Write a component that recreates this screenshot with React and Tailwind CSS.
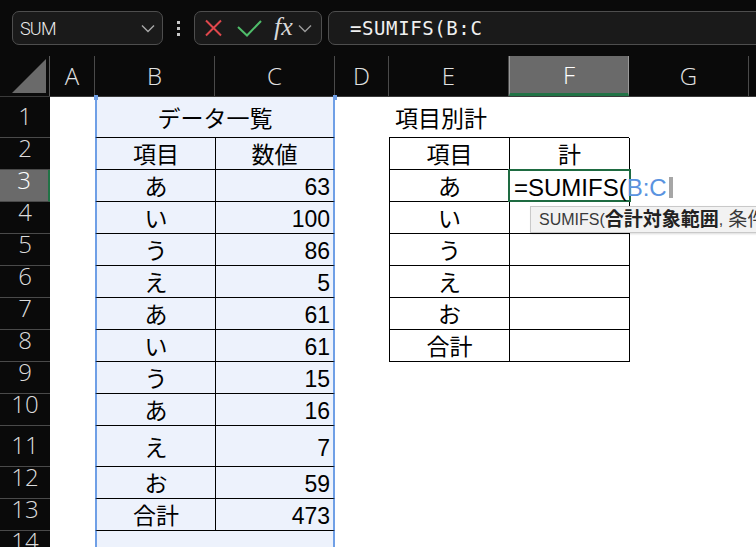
import React from 'react';

// Excel風の画面: 名前ボックス + 数式バー + シート
const COLS = [
  { key: 'A', w: 'w-[45px]' },
  { key: 'B', w: 'w-[120px]' },
  { key: 'C', w: 'w-[120px]' },
  { key: 'D', w: 'w-[54px]' },
  { key: 'E', w: 'w-[120px]' },
  { key: 'F', w: 'w-[120px]' },
  { key: 'G', w: 'w-[120px]' },
];

const ROWS = [
  { n: 1, h: 'h-[41px]', title: 'データ一覧', e: '項目別計' },
  { n: 2, h: 'h-[32px]', b: '項目', c: '数値', e: '項目', f: '計' },
  { n: 3, h: 'h-[32px]', b: 'あ', c: '63', e: 'あ', active: true },
  { n: 4, h: 'h-[32px]', b: 'い', c: '100', e: 'い' },
  { n: 5, h: 'h-[32px]', b: 'う', c: '86', e: 'う' },
  { n: 6, h: 'h-[32px]', b: 'え', c: '5', e: 'え' },
  { n: 7, h: 'h-[32px]', b: 'あ', c: '61', e: 'お' },
  { n: 8, h: 'h-[32px]', b: 'い', c: '61', e: '合計' },
  { n: 9, h: 'h-[32px]', b: 'う', c: '15' },
  { n: 10, h: 'h-[32px]', b: 'あ', c: '16' },
  { n: 11, h: 'h-[41px]', b: 'え', c: '7' },
  { n: 12, h: 'h-[32px]', b: 'お', c: '59' },
  { n: 13, h: 'h-[32px]', b: '合計', c: '473' },
  { n: 14, h: 'h-[32px]' },
];

const Chevron = ({ className }) => (
  <svg width="14" height="9" viewBox="0 0 14 9" className={className}>
    <path d="M1 1.5 L7 7.5 L13 1.5" fill="none" stroke="currentColor" strokeWidth="1.4" />
  </svg>
);

const TopBar = () => (
  <div className="h-[56px] bg-[#0a0a0a] flex items-start pt-[11px]">
    <div className="ml-[12px] w-[151px] h-[34px] shrink-0 rounded-[7px] border border-[#4e4e4e] bg-[#1a1a1a] flex items-center justify-between pl-[7px] pr-[7px]">
      <span className="font-['Roboto'] font-light text-[18px] tracking-[-0.8px] text-[#ececec]">SUM</span>
      <Chevron className="text-[#a8a8a8]" />
    </div>
    <div className="w-[31px] h-[34px] shrink-0 flex flex-col items-center justify-center gap-[3px]">
      <span className="w-[3px] h-[3px] bg-[#c8c8c8]" />
      <span className="w-[3px] h-[3px] bg-[#c8c8c8]" />
      <span className="w-[3px] h-[3px] bg-[#c8c8c8]" />
    </div>
    <div className="w-[128px] h-[34px] shrink-0 rounded-[7px] border border-[#4e4e4e] bg-[#1a1a1a] flex items-center pl-[9px]">
      <svg width="19" height="18" viewBox="0 0 19 18">
        <path d="M2 1.5 L17 16.5 M17 1.5 L2 16.5" stroke="#e0474c" strokeWidth="2" fill="none" />
      </svg>
      <svg width="25" height="18" viewBox="0 0 25 18" className="ml-[14px]">
        <path d="M1 8 L10 16.5 L24 2" stroke="#4fbd6a" strokeWidth="2" fill="none" />
      </svg>
      <span className="ml-[12px] font-['Liberation_Serif'] italic text-[26px] leading-none text-[#d8d8d8] -mt-[3px]">fx</span>
      <Chevron className="ml-[5px] text-[#9a9a9a]" />
    </div>
    <div className="ml-[6px] flex-1 -mr-[20px] h-[34px] rounded-[7px] border border-[#4e4e4e] bg-[#1a1a1a] flex items-center pl-[21px]">
      <span className="font-['DejaVu_Sans_Mono'] text-[19px] tracking-[0.6px] text-[#f0f0f0]">=SUMIFS(B:C</span>
    </div>
  </div>
);

const ColumnHeader = () => (
  <div className="h-[41px] flex bg-[#0a0a0a] border-b border-[#3a3a3a]">
    <div className="w-[50px] shrink-0 border-r border-[#5a5a5a] flex items-end justify-end pr-[3px] pb-[3px]">
      <svg width="34" height="34" viewBox="0 0 34 34">
        <polygon points="34,0 34,34 0,34" fill="#6a6a6a" />
      </svg>
    </div>
    {COLS.map((c) => (
      <div
        key={c.key}
        className={`${c.w} shrink-0 flex items-center justify-center font-['Open_Sans'] font-light text-[24px] leading-none ${
          c.key === 'F'
            ? 'bg-[#6a6a6a] text-white border-x border-[#9a9a9a] border-b-[3px] border-b-[#217346]'
            : 'text-[#e2e2e2] border-r border-[#4a4a4a]'
        }`}
      >
        {c.key}
      </div>
    ))}
    <div className="flex-1" />
  </div>
);

const txt = 'leading-none pt-[4px] text-[23px] text-black';

const Row = ({ r }) => {
  const inE = r.n >= 2 && r.n <= 8;
  const inBC = r.n <= 13;
  const grid = inBC ? 'border-b border-black' : '';
  return (
    <div className={`${r.h} flex`}>
      {/* 行番号 */}
      <div
        className={`w-[50px] shrink-0 flex items-end justify-center pb-[9px] font-['Open_Sans'] font-light text-[24px] leading-none border-b border-[#4a4a4a] ${
          r.active ? 'bg-[#6a6a6a] text-white border-r-2 border-r-[#217346]' : 'bg-[#0a0a0a] text-[#dcdcdc]'
        }`}
      >
        {r.n}
      </div>
      {/* A */}
      <div className="w-[45px] shrink-0" />
      {/* B:C */}
      {r.title ? (
        <div className={`w-[240px] shrink-0 bg-[#edf2fc] border-x-2 border-x-[#6f9fe6] ${grid} flex items-center justify-center ${txt}`}>
          {r.title}
        </div>
      ) : (
        <>
          <div className={`w-[120px] shrink-0 bg-[#edf2fc] border-l-2 border-l-[#6f9fe6] ${grid} flex items-center justify-center ${txt}`}>
            {r.b}
          </div>
          <div
            className={`w-[120px] shrink-0 bg-[#edf2fc] border-r-2 border-r-[#6f9fe6] ${inBC ? 'border-l border-l-black' : ''} ${grid} flex items-center ${
              r.n === 2 ? 'justify-center' : 'justify-end pr-[3px]'
            } ${txt}`}
          >
            {r.c}
          </div>
        </>
      )}
      {/* D */}
      <div className="w-[54px] shrink-0" />
      {/* E */}
      <div
        className={`w-[120px] shrink-0 flex items-center ${txt} ${
          r.n === 1 ? 'justify-start pl-[6px] border-b border-black' : 'justify-center'
        } ${inE ? 'border-l border-b border-black' : ''}`}
      >
        {r.e}
      </div>
      {/* F */}
      <div
        className={`relative w-[120px] shrink-0 flex items-center justify-center ${txt} ${
          r.n === 1 ? 'border-b border-black' : ''
        } ${inE ? 'border-l border-b border-black' : ''}`}
      >
        {r.f}
        {r.active && (
          <>
            <div className="absolute -left-[2px] -right-[2px] -top-[1px] -bottom-[1px] border-2 border-[#1e6b41]" />
            <div className="absolute left-[4px] top-0 bottom-0 z-10 flex items-center pt-[4px] whitespace-nowrap text-[24px] leading-none">
              <span className="text-black">=SUMIFS(</span>
              <span className="text-[#5a93e0]">B:C</span>
              <span className="ml-[2px] w-[4px] h-[21px] bg-[#a6a6a6]" />
            </div>
            <div className="absolute left-[20px] top-[36px] z-20 h-[27px] pl-[8px] pr-[10px] bg-[#f2f2f2] border border-[#c9c9c9] shadow-[1px_1px_2px_rgba(0,0,0,0.15)] flex items-center whitespace-nowrap text-[16px] leading-none text-[#3a3a3a]">
              <span>SUMIFS(</span>
              <b className="font-bold text-[19px] text-[#222]">合計対象範囲</b>
              <span className="mr-[5px]">,</span>
              <span className="text-[19px]">条件範囲1</span>
              <span className="mr-[5px]">,</span>
              <span className="text-[19px]">条件1</span>
              <span>, ...)</span>
            </div>
          </>
        )}
      </div>
      {/* G */}
      <div className={`w-[120px] shrink-0 ${inE ? 'border-l border-black' : ''}`} />
      <div className="flex-1" />
    </div>
  );
};

export default function App() {
  return (
    <div className="relative w-[756px] h-[547px] overflow-hidden bg-white font-['Liberation_Sans','Noto_Sans_CJK_JP',sans-serif]">
      <TopBar />
      <ColumnHeader />
      <div className="relative">
        {ROWS.map((r) => (
          <Row key={r.n} r={r} />
        ))}
        {/* 参照範囲のハンドル */}
        <span className="absolute left-[94px] -top-[2px] w-[4px] h-[5px] bg-[#6f9fe6]" />
        <span className="absolute left-[333px] -top-[2px] w-[4px] h-[5px] bg-[#6f9fe6]" />
      </div>
    </div>
  );
}
